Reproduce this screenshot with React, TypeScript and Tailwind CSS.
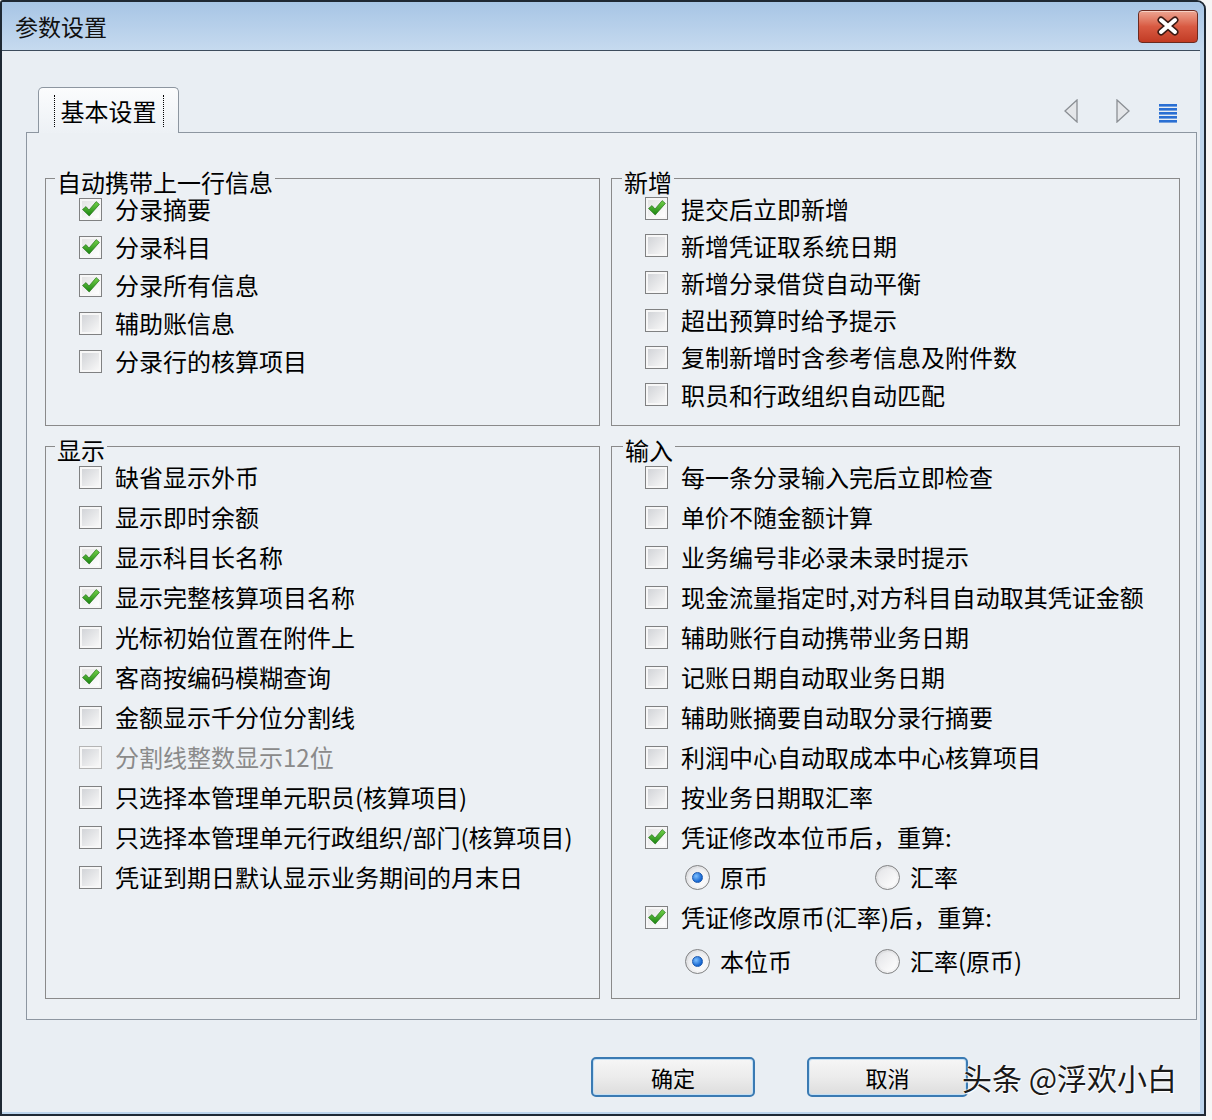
import React from 'react';

type Item = { label: string; checked?: boolean; disabled?: boolean };

const autoCarry: Item[] = [
  { label: '分录摘要', checked: true },
  { label: '分录科目', checked: true },
  { label: '分录所有信息', checked: true },
  { label: '辅助账信息' },
  { label: '分录行的核算项目' },
];

const addNew: Item[] = [
  { label: '提交后立即新增', checked: true },
  { label: '新增凭证取系统日期' },
  { label: '新增分录借贷自动平衡' },
  { label: '超出预算时给予提示' },
  { label: '复制新增时含参考信息及附件数' },
  { label: '职员和行政组织自动匹配' },
];

const display: Item[] = [
  { label: '缺省显示外币' },
  { label: '显示即时余额' },
  { label: '显示科目长名称', checked: true },
  { label: '显示完整核算项目名称', checked: true },
  { label: '光标初始位置在附件上' },
  { label: '客商按编码模糊查询', checked: true },
  { label: '金额显示千分位分割线' },
  { label: '分割线整数显示12位', disabled: true },
  { label: '只选择本管理单元职员(核算项目)' },
  { label: '只选择本管理单元行政组织/部门(核算项目)' },
  { label: '凭证到期日默认显示业务期间的月末日' },
];

const input: Item[] = [
  { label: '每一条分录输入完后立即检查' },
  { label: '单价不随金额计算' },
  { label: '业务编号非必录未录时提示' },
  { label: '现金流量指定时,对方科目自动取其凭证金额' },
  { label: '辅助账行自动携带业务日期' },
  { label: '记账日期自动取业务日期' },
  { label: '辅助账摘要自动取分录行摘要' },
  { label: '利润中心自动取成本中心核算项目' },
  { label: '按业务日期取汇率' },
];

function CheckBox({ checked, disabled }: { checked?: boolean; disabled?: boolean }) {
  return (
    <span
      className={`relative shrink-0 w-[23px] h-[23px] border ${
        disabled ? 'border-[#b4b4b4]' : 'border-[#808182]'
      } bg-[#f7f7f7] p-[2px]`}
    >
      <span
        className={`block w-full h-full ${
          checked
            ? 'bg-linear-to-br from-[#e4e4e4] to-[#ffffff]'
            : 'bg-linear-to-br from-[#d2d4d8] to-[#f8f8f8]'
        }`}
      />
      {checked && (
        <svg viewBox="0 0 21 21" className="absolute inset-0 w-[21px] h-[21px]">
          <defs>
            <linearGradient id="tick" x1="0" y1="0" x2="0" y2="1">
              <stop offset="0" stopColor="#74d24a" />
              <stop offset="1" stopColor="#1a8410" />
            </linearGradient>
          </defs>
          <path d="M2.5 10.5 L6 7.6 L9 11 L16.2 2.6 L19.4 5.4 L9.2 17 Z" fill="url(#tick)" stroke="#2a7420" strokeWidth="0.7" />
        </svg>
      )}
    </span>
  );
}

function Radio({ on }: { on?: boolean }) {
  return (
    <span className="relative shrink-0 w-[25px] h-[25px] rounded-full border border-[#808182] bg-linear-to-br from-[#d8d9dc] to-[#fbfbfb] flex items-center justify-center">
      <span className="w-[19px] h-[19px] rounded-full bg-linear-to-br from-[#e4e5e8] to-[#ffffff] flex items-center justify-center">
        {on && (
          <span className="w-[11px] h-[11px] rounded-full bg-[radial-gradient(circle_at_35%_35%,#7fc0ff,#1565d0_70%)] border border-[#1c5ab0]" />
        )}
      </span>
    </span>
  );
}

function Row({ item, h }: { item: Item; h: string }) {
  return (
    <div className={`flex items-center gap-[13px] ${h}`}>
      <CheckBox checked={item.checked} disabled={item.disabled} />
      <span className={`whitespace-nowrap ${item.disabled ? 'text-[#8a8a8a]' : 'text-black'}`}>{item.label}</span>
    </div>
  );
}

function Legend({ children, ml }: { children: React.ReactNode; ml: string }) {
  return <legend className={`${ml} px-[2px] pt-[8px] leading-[24px] text-black`}>{children}</legend>;
}

function RadioPair({ a, b }: { a: string; b: string }) {
  return (
    <div className="flex items-center h-[40px] pl-[40px]">
      <div className="flex items-center gap-[10px] w-[190px]">
        <Radio on />
        <span>{a}</span>
      </div>
      <div className="flex items-center gap-[10px]">
        <Radio />
        <span>{b}</span>
      </div>
    </div>
  );
}

export default function App() {
  return (
    <div className="relative w-[1212px] h-[1120px] bg-[#f6f6f6] overflow-hidden font-['Noto_Sans_CJK_SC','Noto_Sans',sans-serif] text-[24px] leading-[24px] text-black">
      <div className="w-[1206px] h-[1116px] border-2 border-[#1e2833] rounded-tr-[9px] rounded-tl-[3px] bg-[#bcd4ec] flex flex-col overflow-hidden">
        {/* title bar */}
        <div className="h-[48px] shrink-0 flex items-center justify-between pl-[13px] pr-[6px] bg-linear-to-b from-[#a7c5e5] to-[#c6daef]">
          <span className="text-[23px] text-[#111]">参数设置</span>
          <div className="w-[60px] h-[33px] rounded-[4px] border border-[#6b2a20] bg-linear-to-b from-[#eca592] via-[#d85a42] to-[#c23b24] shadow-[inset_0_1px_0_#f6d0c4] flex items-center justify-center">
            <svg width="24" height="20" viewBox="-12 -10 24 20">
              <path d="M-7 -6 L7 6 M7 -6 L-7 6" stroke="#3b1a14" strokeWidth="7" strokeLinecap="round" />
              <path d="M-7 -6 L7 6 M7 -6 L-7 6" stroke="#ffffff" strokeWidth="4" strokeLinecap="round" />
            </svg>
          </div>
        </div>

        {/* body */}
        <div className="flex-1 mr-[4px] mb-[2px] bg-[#e9eef3] border-t border-[#3d4c5c] flex flex-col">
          {/* tab strip */}
          <div className="h-[81px] shrink-0 flex items-end justify-between pl-[36px] pr-[23px]">
            <div className="relative z-10 -mb-px w-[141px] h-[46px] rounded-t-[5px] border border-b-0 border-[#8d96a0] bg-linear-to-b from-[#fbfcfd] to-[#edf1f5] flex items-center justify-center">
              <span className="border-x border-dotted border-black px-[6px] h-[32px] flex items-center text-[24px]">基本设置</span>
            </div>
            <div className="flex items-end mb-[9px]">
              <svg width="14" height="24" viewBox="0 0 14 24">
                <polygon points="13,1 1,12 13,23" fill="#e4e6e9" stroke="#8b8f94" strokeWidth="1.3" />
              </svg>
              <svg width="14" height="24" viewBox="0 0 14 24" className="ml-[38px]">
                <polygon points="1,1 13,12 1,23" fill="#e4e6e9" stroke="#8b8f94" strokeWidth="1.3" />
              </svg>
              <svg width="18" height="19" viewBox="0 0 18 19" className="ml-[29px]">
                {[0, 4, 8, 12, 16].map((y) => (
                  <rect key={y} x="0" y={y} width="18" height="2.6" fill="#2a6fd3" />
                ))}
              </svg>
            </div>
          </div>

          {/* tab page */}
          <div className="ml-[24px] mr-[3px] h-[888px] border border-[#8d96a0] bg-[#ecf0f4] pt-[29px] pl-[18px]">
            <div className="grid grid-cols-[555px_569px] gap-x-[11px] gap-y-[4px]">
              <fieldset className="min-w-0 h-[264px] border border-[#8a8a8a]">
                <Legend ml="ml-[9px]">自动携带上一行信息</Legend>
                <div className="-mt-[4px] pl-[33px] flex flex-col">
                  {autoCarry.map((it) => (
                    <Row key={it.label} item={it} h="h-[38px]" />
                  ))}
                </div>
              </fieldset>

              <fieldset className="min-w-0 h-[264px] border border-[#8a8a8a]">
                <Legend ml="ml-[10px]">新增</Legend>
                <div className="-mt-[4px] pl-[33px] flex flex-col">
                  {addNew.map((it) => (
                    <Row key={it.label} item={it} h="h-[37.2px]" />
                  ))}
                </div>
              </fieldset>

              <fieldset className="min-w-0 h-[569px] border border-[#8a8a8a]">
                <Legend ml="ml-[9px]">显示</Legend>
                <div className="-mt-[5px] pl-[33px] flex flex-col">
                  {display.map((it) => (
                    <Row key={it.label} item={it} h="h-[40px]" />
                  ))}
                </div>
              </fieldset>

              <fieldset className="min-w-0 h-[569px] border border-[#8a8a8a]">
                <Legend ml="ml-[11px]">输入</Legend>
                <div className="-mt-[5px] pl-[33px] flex flex-col">
                  {input.map((it) => (
                    <Row key={it.label} item={it} h="h-[40px]" />
                  ))}
                  <Row item={{ label: '凭证修改本位币后，重算:', checked: true }} h="h-[40px]" />
                  <RadioPair a="原币" b="汇率" />
                  <Row item={{ label: '凭证修改原币(汇率)后，重算:', checked: true }} h="h-[40px]" />
                  <div className="h-[48px] flex items-center">
                    <div className="w-full">
                      <RadioPair a="本位币" b="汇率(原币)" />
                    </div>
                  </div>
                </div>
              </fieldset>
            </div>
          </div>

          {/* buttons */}
          <div className="flex mt-[37px] pl-[589px] gap-[52px]">
            <button className="w-[164px] h-[40px] rounded-[5px] border-2 border-[#3a7ab3] bg-linear-to-b from-[#f6f6f6] via-[#ececec] to-[#dddddd] shadow-[inset_0_0_0_1px_#c4e0f5] text-[22px] text-black">
              确定
            </button>
            <button className="w-[161px] h-[40px] rounded-[5px] border-2 border-[#3a7ab3] bg-linear-to-b from-[#f6f6f6] via-[#ececec] to-[#dddddd] shadow-[inset_0_0_0_1px_#c4e0f5] text-[22px] text-black">
              取消
            </button>
          </div>
        </div>
      </div>

      {/* watermark */}
      <div className="absolute left-[962px] top-[1059px] text-[30px] leading-[36px] text-[#1a1a1a] whitespace-nowrap [text-shadow:0_0_2px_#fff,0_0_2px_#fff,1px_1px_1px_#fff]">
        头条 @浮欢小白
      </div>
    </div>
  );
}
